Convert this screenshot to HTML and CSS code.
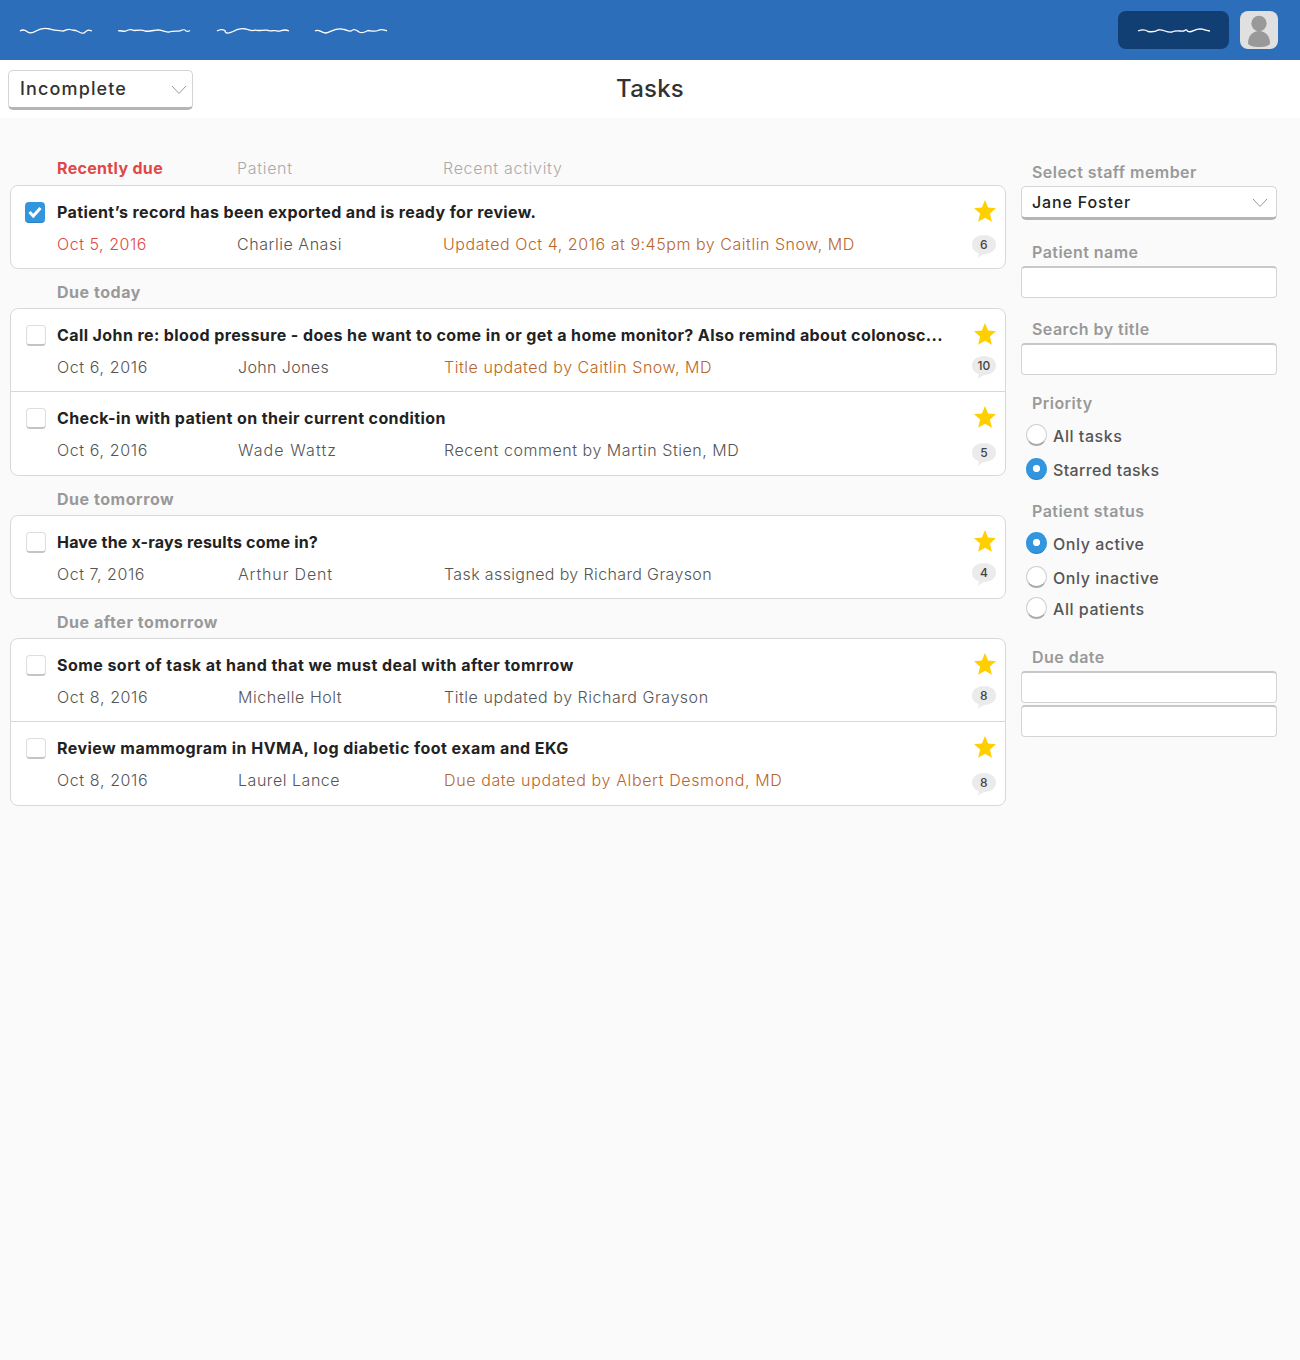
FILE: index.html
```html
<!DOCTYPE html>
<html lang="en">
<head>
<meta charset="utf-8">
<title>Tasks</title>
<link rel="stylesheet" href="styles.css">
</head>
<body>
<svg width="0" height="0" class="defs" aria-hidden="true">
  <symbol id="star" viewBox="0 0 22 22"><path d="M11 0l3.100 7.600 7.900.600-6.100 5.200L17.900 21.700 11 17.700 4.100 21.700 6.100 13.400 0 8.200l7.900-.6z" fill="#ffcf00"/></symbol>
  <symbol id="bubble" viewBox="0 0 24 23"><path d="M12 0C18.500 0 24 3.500 24 9.500S18.500 19 12.500 19C10 20 8 21.500 5.500 22.800c.8-1.500 1.300-3 1.200-4.800C3 17 0 14 0 9.500 0 3.500 5.500 0 12 0z" fill="#ebebeb"/></symbol>
  <symbol id="chevron" viewBox="0 0 16 10"><path d="M1 1l7 7.500L15 1" fill="none" stroke="#999" stroke-width="1"/></symbol>
</svg>

<header class="topbar">
  <nav class="nav">
    <svg class="squiggle" viewBox="0 0 72 8"><path d="M0 4C3 2 5 3 7 4.500C10 7 13 6 16 4C20 1.500 26 1 30 2C34 4 38 2.800 42 4C45 4.500 47 1.500 50 2.500C53 4 55 2.500 57 4C60 5 61 7 64 6C67 3 68 2.500 72 4"/></svg>
    <svg class="squiggle" viewBox="0 0 72 8"><path d="M0 4C3 3 5 5 8 4C11 2 14 2.500 16 3.500C20 3 25 2.800 27 4C32 5 36 3 40 2.800C44 3 47 5.500 51 5C55 3.500 60 4.500 62 3.800C66 2 67 2.500 68 4C70 5 71 4 72 3.500"/></svg>
    <svg class="squiggle" viewBox="0 0 72 8"><path d="M0 4C3 2 6 2.500 8 3.500C8 7 12 6.500 16 4.500C20 2 24 1 29 2C34 3.500 36 4.500 38 3C42 4.500 46 2.500 50 3.200C54 5 58 2.500 60 4C64 5 66 1 72 4"/></svg>
    <svg class="squiggle" viewBox="0 0 72 8"><path d="M0 4C4 1.500 6 6 11 6C16 5 20 1 27 2C32 2.500 33 5 36 4C40 .5 42 4 44 5C48 7 50 5 53 3.500C57 4 60 5 63 3.500C67 1.500 69 3 72 4"/></svg>
  </nav>
  <div class="account">
    <a class="action"><svg class="squiggle" viewBox="0 0 72 8"><path d="M0 4C5 2 8 3 10 4.500C14 5 18 4.500 20 3C26 2 28 6 34 5C38 3 42 4.500 46 4C49 1.500 49 4 50 4.500C54 6 56 2 62 1.800C66 2 68 4 72 4"/></svg></a>
    <svg class="avatar" viewBox="0 0 38 38"><rect width="38" height="38" rx="8" fill="#e0e0e0"/><circle cx="19" cy="12.500" r="7.700" fill="#999"/><path d="M8 32C8 25 12.500 20 19 20s11 5 11 12c0 2.500-5 4-11 4S8 34.500 8 32z" fill="#999"/></svg>
  </div>
</header>

<div class="titlebar">
  <div class="select filter"><span>Incomplete</span><svg class="chevron"><use href="#chevron"/></svg></div>
  <h1>Tasks</h1>
</div>

<div class="page">
  <main class="tasks">
    <div class="heading columns first"><span class="due">Recently due</span><span class="col">Patient</span><span class="col">Recent activity</span></div>
    <section class="card first">
      <article class="task">
        <span class="check on"><svg viewBox="0 0 20 20"><path d="M4.500 10l3.800 4L15.500 6" fill="none" stroke="#fff" stroke-width="3"/></svg></span>
        <div class="body"><h3 class="snug">Patient’s record has been exported and is ready for review.</h3>
          <div class="columns"><span class="late">Oct 5, 2016</span><span>Charlie Anasi</span><span class="alert">Updated Oct 4, 2016 at 9:45pm by Caitlin Snow, MD</span></div></div>
        <div class="side mid"><svg class="star"><use href="#star"/></svg><span class="count"><svg><use href="#bubble"/></svg><b>6</b></span></div>
      </article>
    </section>

    <h2 class="heading">Due today</h2>
    <section class="card">
      <article class="task">
        <span class="check"></span>
        <div class="body"><h3>Call John re: blood pressure - does he want to come in or get a home monitor? Also remind about colonosc...</h3>
          <div class="columns"><span class="wide">Oct 6, 2016</span><span class="snug">John Jones</span><span class="alert">Title updated by Caitlin Snow, MD</span></div></div>
        <div class="side"><svg class="star"><use href="#star"/></svg><span class="count"><svg><use href="#bubble"/></svg><b>10</b></span></div>
      </article>
      <article class="task">
        <span class="check"></span>
        <div class="body"><h3>Check-in with patient on their current condition</h3>
          <div class="columns"><span class="wide">Oct 6, 2016</span><span class="widest">Wade Wattz</span><span>Recent comment by Martin Stien, MD</span></div></div>
        <div class="side low"><svg class="star"><use href="#star"/></svg><span class="count"><svg><use href="#bubble"/></svg><b>5</b></span></div>
      </article>
    </section>

    <h2 class="heading">Due tomorrow</h2>
    <section class="card">
      <article class="task">
        <span class="check"></span>
        <div class="body"><h3 class="tight">Have the x-rays results come in?</h3>
          <div class="columns"><span>Oct 7, 2016</span><span class="wider">Arthur Dent</span><span class="snug">Task assigned by Richard Grayson</span></div></div>
        <div class="side"><svg class="star"><use href="#star"/></svg><span class="count"><svg><use href="#bubble"/></svg><b>4</b></span></div>
      </article>
    </section>

    <h2 class="heading">Due after tomorrow</h2>
    <section class="card">
      <article class="task">
        <span class="check"></span>
        <div class="body"><h3 class="roomy">Some sort of task at hand that we must deal with after tomrrow</h3>
          <div class="columns"><span class="wide">Oct 8, 2016</span><span>Michelle Holt</span><span>Title updated by Richard Grayson</span></div></div>
        <div class="side"><svg class="star"><use href="#star"/></svg><span class="count"><svg><use href="#bubble"/></svg><b>8</b></span></div>
      </article>
      <article class="task">
        <span class="check"></span>
        <div class="body"><h3 class="roomy">Review mammogram in HVMA, log diabetic foot exam and EKG</h3>
          <div class="columns"><span class="wide">Oct 8, 2016</span><span>Laurel Lance</span><span class="alert wide">Due date updated by Albert Desmond, MD</span></div></div>
        <div class="side low"><svg class="star"><use href="#star"/></svg><span class="count"><svg><use href="#bubble"/></svg><b>8</b></span></div>
      </article>
    </section>
  </main>

  <aside class="filters">
    <label>Select staff member</label>
    <div class="select staff"><span class="wider">Jane Foster</span><svg class="chevron"><use href="#chevron"/></svg></div>
    <label class="name">Patient name</label>
    <div class="input"></div>
    <label class="search">Search by title</label>
    <div class="input"></div>
    <label class="priority">Priority</label>
    <div class="option"><i class="radio"></i><span>All tasks</span></div>
    <div class="option"><i class="radio on"></i><span class="snug">Starred tasks</span></div>
    <label class="status">Patient status</label>
    <div class="option"><i class="radio on"></i><span>Only active</span></div>
    <div class="option"><i class="radio"></i><span>Only inactive</span></div>
    <div class="option short"><i class="radio"></i><span>All patients</span></div>
    <label class="date">Due date</label>
    <div class="input"></div>
    <div class="input second"></div>
  </aside>
</div>
</body>
</html>
```
FILE: styles.css
```css
* { box-sizing: border-box; }
body {
  margin: 0;
  min-height: 1360px;
  background: #fafafa;
  color: #555;
  font: 300 16px/20px Inter, "Liberation Sans", sans-serif;
  letter-spacing: .54px;
}
h1, h2, h3 { margin: 0; font: inherit; }
svg { display: block; }
.defs { position: absolute; }

.topbar {
  display: flex;
  justify-content: space-between;
  align-items: center;
  height: 60px;
  padding: 0 22px 0 20px;
  background: #2c6eb9;
}
.nav { display: flex; gap: 26.300px; }
.squiggle { width: 72px; height: 8px; margin-top: 2px; fill: none; stroke: #fff; stroke-width: 1.300; overflow: visible; }
.account { display: flex; gap: 11px; }
.action {
  display: flex;
  align-items: center;
  justify-content: center;
  width: 111px;
  height: 38px;
  border-radius: 8px;
  background: #113f73;
}
.avatar { width: 38px; height: 38px; }

.titlebar {
  display: grid;
  grid-template-columns: 1fr auto 1fr;
  height: 58px;
  padding: 10px 8px 0;
  background: #fff;
}
h1 { color: #333; font-size: 24px; font-weight: 500; line-height: 38px; letter-spacing: .2px; }

.select {
  display: flex;
  align-items: center;
  justify-content: space-between;
  border: 1px solid #d4d4d4;
  border-bottom: 3px solid #b5b5b5;
  border-radius: 5px;
  background: #fff;
}
.chevron { width: 16px; height: 10px; margin-top: 2px; }
.filter { width: 185px; height: 40px; padding: 0 5px 0 11px; color: #333; font-size: 18px; font-weight: 500; letter-spacing: 1.130px; }

.page { display: flex; gap: 15px; padding: 40px 23px 0 10px; }
.tasks { width: 996px; }
.heading { height: 39px; padding: 13px 0 0 47px; color: #999; font-weight: 700; }
.heading.first { height: 27px; padding-top: 0; }
.columns { display: grid; grid-template-columns: 181px 206px 1fr; }
.first .columns, .columns.first { grid-template-columns: 180px 206px 1fr; }
.heading .due { color: #e04848; letter-spacing: .320px; }
.heading .col { color: #aaa; font-weight: 300; letter-spacing: .7px; }

.card { border: 1px solid #d8d8d8; border-radius: 8px; background: #fff; }
.task { display: flex; height: 82px; padding: 0 9px 0 15px; }
.task + .task { height: 84px; border-top: 1px solid #d8d8d8; }
.check {
  width: 20px;
  height: 21px;
  margin: 16px 11px 0 0;
  border: 1px solid #dedede;
  border-bottom: 2px solid #c4c4c4;
  border-radius: 4px;
  background: #fff;
}
.check.on { margin: 16px 12px 0 -1px; border: 0; border-bottom: 1px solid #2a82c0; background: #3196de; }
.body { flex: 1; padding-top: 16px; white-space: nowrap; }
h3 { height: 32px; color: #222; font-weight: 700; letter-spacing: .4px; }
.late { color: #e04848; }
.alert { color: #b8662a; }
.tight { letter-spacing: .190px; }
.snug { letter-spacing: .370px; }
.roomy { letter-spacing: .450px; }
.wide { letter-spacing: .620px; }
.wider { letter-spacing: .850px; }
.widest { letter-spacing: 1.090px; }
.side { width: 24px; padding-top: 14px; }
.star { width: 22px; height: 22px; margin-left: 2px; }
.count { display: grid; width: 24px; height: 23px; margin-top: 11px; }
.mid .count { margin-top: 13px; }
.low .count { margin-top: 15px; }
.count > * { grid-area: 1 / 1; width: 24px; height: 23px; }
.count b { color: #444; font-size: 12px; font-weight: 500; line-height: 19px; letter-spacing: .2px; text-align: center; }

.filters { width: 256px; padding-top: 4px; }
.filters label { display: block; height: 24px; padding-left: 11px; color: #999; font-weight: 600; letter-spacing: .460px; }
.staff { height: 34px; padding: 0 8px 0 10px; color: #222; font-weight: 500; }
.filters .name { margin-top: 22px; }
.filters .search { margin-top: 21px; }
.filters .priority { height: 25px; margin-top: 18px; }
.filters .status { height: 25px; margin-top: 15px; }
.filters .date { margin-top: 25px; }
.input {
  height: 32px;
  border: 1px solid #d4d4d4;
  border-top: 2px solid #c8c8c8;
  border-radius: 4px;
  background: #fff;
}
.input.second { margin-top: 2px; }
.option { display: flex; align-items: center; gap: 6px; height: 34px; padding-left: 5px; font-weight: 500; }
.option span { padding-top: 2px; }
.option.short { height: 28px; }
.radio { width: 21px; height: 22px; border: 1px solid #d0d0d0; border-bottom: 2px solid #aaa; border-radius: 50%; background: #fff; }
.radio.on { border: 0; border-bottom: 1px solid #2a82c0; background: radial-gradient(circle, #fff 3.300px, #3196de 4px); }
```
